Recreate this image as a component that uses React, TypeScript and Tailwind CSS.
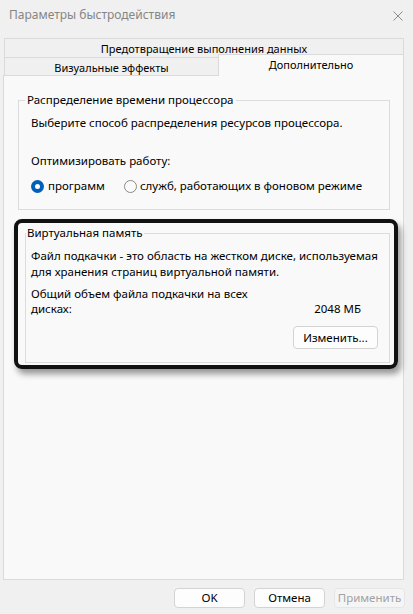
import React from 'react';

// Windows "Performance Options" dialog, "Advanced" tab

function Radio({ checked, className }: { checked?: boolean; className?: string }) {
  if (checked) {
    return (
      <span className={`flex h-[13px] w-[13px] shrink-0 items-center justify-center rounded-full bg-[#005fb8] ${className ?? ''}`}>
        <span className="block h-[5px] w-[5px] rounded-full bg-white" />
      </span>
    );
  }
  return (
    <span className={`block h-[13px] w-[13px] shrink-0 rounded-full border border-[#8a8a8a] bg-[#fbfbfb] ${className ?? ''}`} />
  );
}

function GroupBox({
  title,
  className,
  legendClass,
  children,
}: {
  title: string;
  className?: string;
  legendClass?: string;
  children: React.ReactNode;
}) {
  return (
    <fieldset className={`border border-[#dcdcdc] ${className ?? ''}`}>
      <legend className={`leading-[16px] ${legendClass ?? ''}`}>{title}</legend>
      {children}
    </fieldset>
  );
}

function DialogButton({ label, disabled }: { label: string; disabled?: boolean }) {
  return (
    <button
      disabled={disabled}
      className={`flex h-[20px] w-[71px] items-center justify-center rounded-[4px] border leading-none ${
        disabled
          ? 'border-[#e6e6e6] bg-[#f5f5f5] text-[#a2a2a2]'
          : 'border-[#d3d3d3] bg-[#fdfdfd] text-black'
      }`}
    >
      {label}
    </button>
  );
}

export default function App() {
  return (
    <div className="flex h-[614px] w-[413px] flex-col bg-[#f0f0f0] font-['Segoe_UI','Noto_Sans',sans-serif] text-[11.5px] text-black">
      {/* title bar */}
      <div className="flex h-[30px] shrink-0 items-center justify-between pl-[9px] pr-[10px] text-[12px] text-[#858585]">
        <span>Параметры быстродействия</span>
        <svg width="10" height="10" viewBox="0 0 10 10" className="mt-px">
          <path d="M0.5 0.5 L9.5 9.5 M9.5 0.5 L0.5 9.5" stroke="#8c8c8c" strokeWidth="1" />
        </svg>
      </div>

      {/* tabs */}
      <div className="ml-[4px] mr-[9px] mt-[8px] text-[11px]">
        <div className="flex h-[19px] items-center justify-center border border-b-0 border-[#dadada] bg-[#f0f0f0] leading-none">
          Предотвращение выполнения данных
        </div>
        <div className="flex h-[18px] items-start">
          <div className="flex h-[18px] w-[215px] items-center justify-center border border-b-0 border-[#dadada] bg-[#f0f0f0] pt-px leading-none">
            Визуальные эффекты
          </div>
          <div className="relative z-10 -mt-[3px] -ml-px flex h-[22px] flex-1 items-center justify-center border border-b-0 border-[#dadada] bg-[#f9f9f9] pb-[2px] leading-none">
            Дополнительно
          </div>
        </div>
      </div>

      {/* panel */}
      <div className="ml-[3px] mr-[9px] flex h-[505px] flex-col border border-[#dadada] bg-[#f9f9f9]">
        <GroupBox
          title="Распределение времени процессора"
          className="ml-[14px] mr-[13px] mt-[16px] px-[12px] pb-[15px]"
          legendClass="-ml-[6px] px-[2px]"
        >
          <div className="mt-[7px] leading-[16px]">Выберите способ распределения ресурсов процессора.</div>
          <div className="mt-[22px] leading-[16px]">Оптимизировать работу:</div>
          <div className="mt-[9px] flex items-center leading-[16px]">
            <Radio checked />
            <span className="ml-[4px]">программ</span>
            <Radio className="ml-[19px]" />
            <span className="ml-[3px]">служб, работающих в фоновом режиме</span>
          </div>
        </GroupBox>

        <div className="ml-[10px] mr-[5px] mt-[9px] rounded-[8px] border-[4px] border-[#111] pb-[2px] pl-[7px] pr-[4px] pt-[2px] shadow-[3px_5px_6px_rgba(0,0,0,0.4)]">
          <GroupBox
            title="Виртуальная память"
            className="pb-[13px] pl-[5px] pr-[8px]"
            legendClass="-ml-[5px] px-[1px]"
          >
            <div className="mt-[7px] leading-[16px]">
              Файл подкачки - это область на жестком диске, используемая для хранения страниц виртуальной памяти.
            </div>
            <div className="mt-[6px] flex items-end justify-between leading-[15px]">
              <span className="w-[230px]">Общий объем файла подкачки на всех дисках:</span>
              <span className="pr-[20px]">2048 МБ</span>
            </div>
            <div className="mt-[10px] flex justify-end pr-[3px]">
              <button className="flex h-[23px] w-[85px] items-center justify-center rounded-[4px] border border-[#d3d3d3] bg-[#fdfdfd] leading-none">
                Изменить...
              </button>
            </div>
          </GroupBox>
        </div>
      </div>

      {/* footer buttons */}
      <div className="mr-[8px] mt-[8px] flex justify-end gap-[9px]">
        <DialogButton label="OK" />
        <DialogButton label="Отмена" />
        <DialogButton label="Применить" disabled />
      </div>
    </div>
  );
}
